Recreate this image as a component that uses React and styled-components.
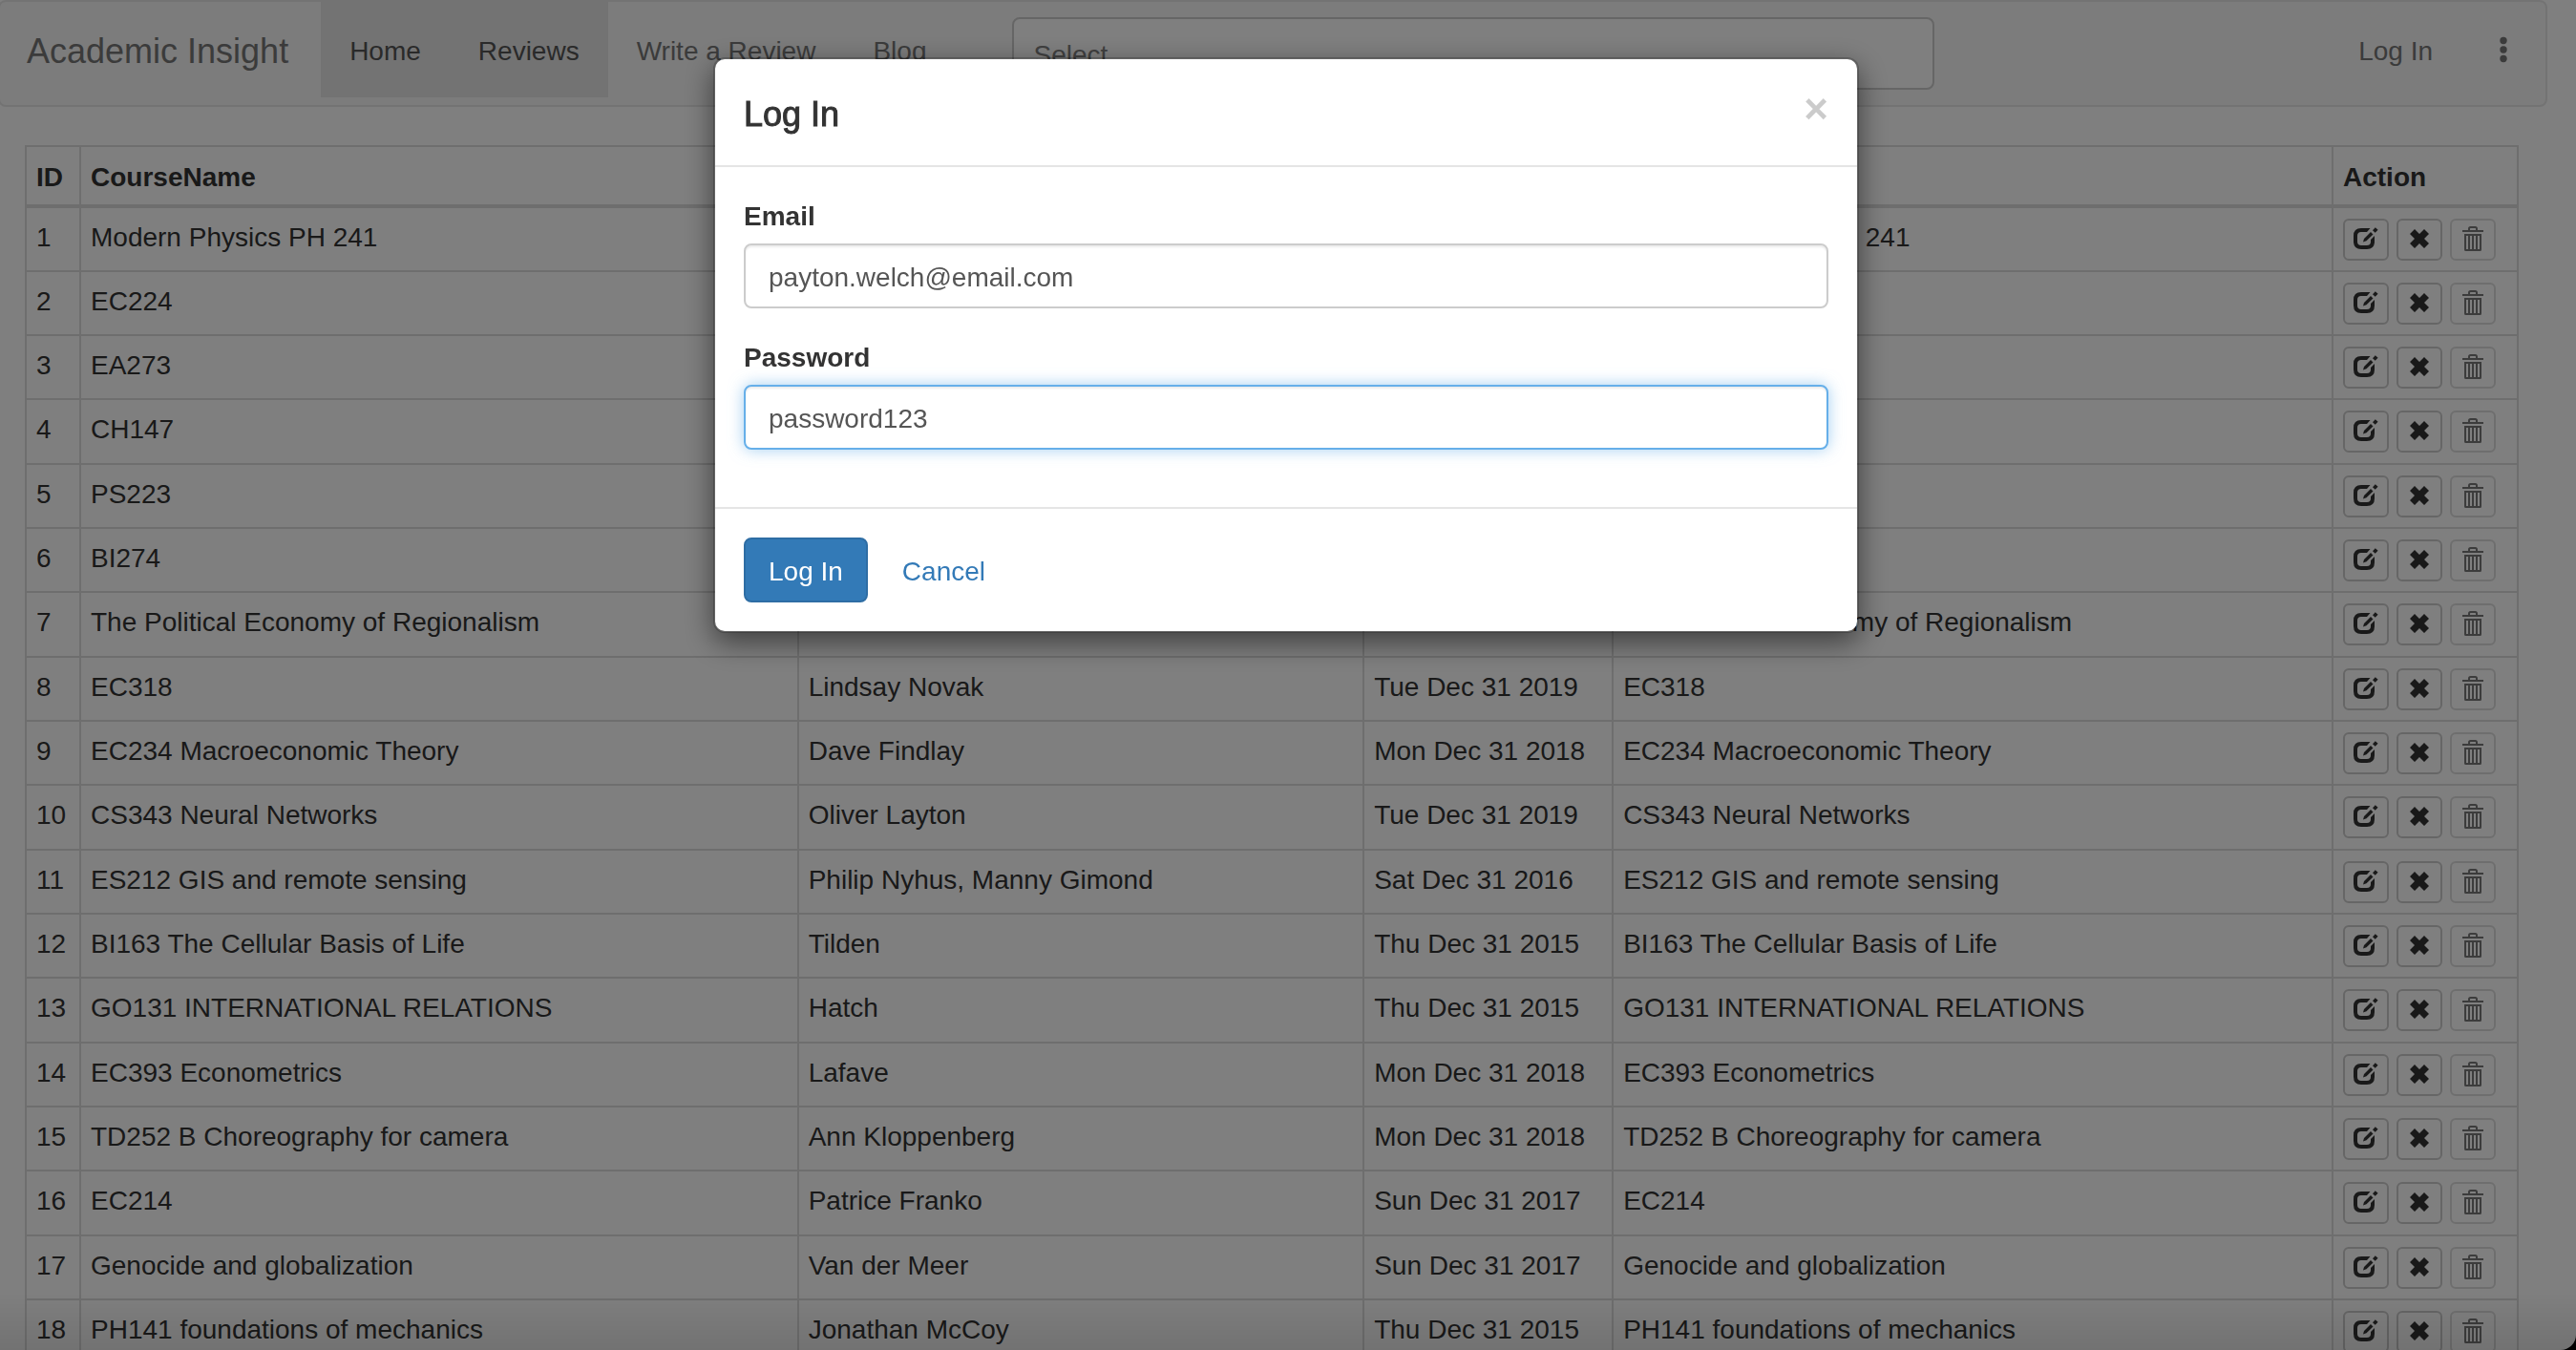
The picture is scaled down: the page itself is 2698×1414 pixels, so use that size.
import React from "react";
import styled, { createGlobalStyle, css } from "styled-components";

const GlobalStyle = createGlobalStyle`
  *, *::before, *::after { box-sizing: border-box; }
  html, body { margin: 0; height: 100%; overflow: hidden; background: #000; }
  body, button, input {
    font-family: "Liberation Sans", Arial, sans-serif;
    font-size: 28px;
    line-height: 40px;
  }
  body { color: #333; }
`;

const Page = styled.div`
  height: 100vh;
  overflow: hidden;
  border-bottom-right-radius: 16px;
  background: #fff;
`;

const Navbar = styled.nav`
  display: flex;
  align-items: flex-start;
  height: 112px;
  margin: 0 30px 40px -2px;
  border: 2px solid #e7e7e7;
  border-radius: 8px;
  background: #f8f8f8;
`;

const Brand = styled.a`
  padding: 30px 34px 26px 28px;
  color: #777;
  font-size: 36px;
  line-height: 44px;
  text-decoration: none;
`;

const NavLink = styled.a`
  padding: 30px 30px 26px;
  color: ${(p) => (p.$active ? "#555" : "#777")};
  background: ${(p) => (p.$active ? "#e7e7e7" : "transparent")};
  line-height: 44px;
  text-decoration: none;
`;

const CourseSearch = styled.input`
  flex: 0 1 966px;
  min-width: 0;
  height: 76px;
  margin: 16px auto 0 60px;
  padding: 4px 20px 0;
  border: 2px solid #ccc;
  border-radius: 8px;
  background: #fff;
  &::placeholder { color: #808080; opacity: 1; }
`;

const MenuButton = styled.button`
  display: flex;
  padding: 36px 30px;
  border: 0;
  background: transparent;
  color: #777;
`;

const TableArea = styled.main`
  padding: 0 60px 0 26px;
`;

const Table = styled.table`
  width: 100%;
  table-layout: fixed;
  border-collapse: collapse;
  border: 2px solid #ddd;
  th, td {
    padding: 11px 10px 9px;
    border: 2px solid #ddd;
    text-align: left;
    vertical-align: top;
    white-space: nowrap;
  }
  th {
    padding: 12px 10px 8px;
    border-bottom-width: 4px;
  }
  tbody tr { height: 67px; }
  tbody tr:nth-child(3n + 1) { height: 68px; }
`;

const Col = styled.col`
  width: ${(p) => p.$width};
`;

const Actions = styled.div`
  display: flex;
  gap: 8px;
`;

const IconButton = styled.button`
  display: flex;
  align-items: center;
  justify-content: center;
  width: 48px;
  height: 44px;
  padding: 0 0 2px;
  border: 2px solid #ccc;
  border-radius: 6px;
  background: #fff;
  color: #333;
  &:disabled { opacity: 0.65; }
`;

const Backdrop = styled.div`
  position: fixed;
  inset: 0;
  padding: 60px 4px 0 0;
  background:
    linear-gradient(to top, rgba(0, 0, 0, 0.1), transparent 60px),
    rgba(0, 0, 0, 0.5);
`;

const Dialog = styled.form`
  max-width: 1200px;
  margin: 0 auto;
  border: 2px solid rgba(0, 0, 0, 0.2);
  border-radius: 12px;
  background: #fff;
  background-clip: padding-box;
  box-shadow: 0 10px 30px rgba(0, 0, 0, 0.5);
`;

const DialogHeader = styled.header`
  display: flex;
  justify-content: space-between;
  align-items: flex-start;
  height: 113px;
  padding: 30px;
  border-bottom: 2px solid #e5e5e5;
`;

const DialogTitle = styled.h4`
  margin: 0;
  font-size: 36px;
  font-weight: 500;
  line-height: 56px;
  -webkit-text-stroke: 1px currentColor;
`;

const CloseButton = styled.button`
  padding: 0;
  border: 0;
  background: transparent;
  color: #000;
  font-size: 44px;
  font-weight: 700;
  line-height: 44px;
  opacity: 0.2;
`;

const DialogBody = styled.div`
  display: flex;
  flex-direction: column;
  gap: 30px;
  padding: 30px 30px 60px;
`;

const Field = styled.div`
  display: flex;
  flex-direction: column;
  gap: 6px;
`;

const Label = styled.label`
  font-weight: 700;
  line-height: 44px;
`;

const focused = css`
  border-color: #66afe9;
  box-shadow: inset 0 2px 2px rgba(0, 0, 0, 0.075), 0 0 16px rgba(102, 175, 233, 0.6);
`;

const TextInput = styled.input`
  width: 100%;
  height: 68px;
  padding: 14px 24px 10px;
  border: 2px solid #ccc;
  border-radius: 8px;
  background: #fff;
  color: #555;
  outline: none;
  box-shadow: inset 0 2px 2px rgba(0, 0, 0, 0.075);
  ${(p) => p.$focused && focused}
`;

const DialogFooter = styled.footer`
  display: flex;
  gap: 10px;
  padding: 30px;
  border-top: 2px solid #e5e5e5;
`;

const Button = styled.button`
  height: 68px;
  padding: 14px 24px 10px;
  border: 2px solid ${(p) => (p.$primary ? "#2e6da4" : "transparent")};
  border-radius: 8px;
  background: ${(p) => (p.$primary ? "#337ab7" : "transparent")};
  color: ${(p) => (p.$primary ? "#fff" : "#337ab7")};
`;

const EditIcon = () => (
  <svg width="26" height="24" viewBox="0 0 26 24" aria-hidden="true">
    <path d="M14 3H8Q2 3 2 9v6q0 6 6 6h6q6 0 6-6v-2" fill="none" stroke="currentColor" strokeWidth="4" />
    <path d="M14 1h3.500l-3.500 4zM18 13l4-4v5h-4zM10 15.500l1-3.500 7-7 2.500 2.500-7 6.800zM20 3.200l2.800-2.900 2.800 2.500-2.900 2.900z" fill="currentColor" />
  </svg>
);

const RemoveIcon = () => (
  <svg width="20" height="20" viewBox="0 0 20 20" aria-hidden="true">
    <path d="M5 0l5 5 5-5 5 5-5 5 5 5-5 5-5-5-5 5-5-5 5-5-5-5z" fill="currentColor" />
  </svg>
);

const TrashIcon = () => (
  <svg width="22" height="26" viewBox="0 0 22 26" aria-hidden="true">
    <g fill="none" stroke="currentColor" strokeWidth="2">
      <path d="M7 5V2.500Q7 1 8.500 1h5Q15 1 15 2.500V5M0 5h22" />
      <path d="M3 9h16v15.500q0 .5-.5.5h-15q-.5 0-.5-.5z" />
      <path d="M7 9v16M11 9v16M15 9v16" />
    </g>
  </svg>
);

const DotsIcon = () => (
  <svg width="28" height="28" viewBox="0 0 28 28" aria-hidden="true">
    <g fill="currentColor">
      <circle cx="14" cy="4.500" r="3.700" />
      <circle cx="14" cy="14" r="3.700" />
      <circle cx="14" cy="23.500" r="3.700" />
    </g>
  </svg>
);

const courses = [
  ["Modern Physics PH 241", "", ""],
  ["EC224", "", ""],
  ["EA273", "", ""],
  ["CH147", "", ""],
  ["PS223", "", ""],
  ["BI274", "", ""],
  ["The Political Economy of Regionalism", "Walter Hatch", "Sun Dec 31 2017"],
  ["EC318", "Lindsay Novak", "Tue Dec 31 2019"],
  ["EC234 Macroeconomic Theory", "Dave Findlay", "Mon Dec 31 2018"],
  ["CS343 Neural Networks", "Oliver Layton", "Tue Dec 31 2019"],
  ["ES212 GIS and remote sensing", "Philip Nyhus, Manny Gimond", "Sat Dec 31 2016"],
  ["BI163 The Cellular Basis of Life", "Tilden", "Thu Dec 31 2015"],
  ["GO131 INTERNATIONAL RELATIONS", "Hatch", "Thu Dec 31 2015"],
  ["EC393 Econometrics", "Lafave", "Mon Dec 31 2018"],
  ["TD252 B Choreography for camera", "Ann Kloppenberg", "Mon Dec 31 2018"],
  ["EC214", "Patrice Franko", "Sun Dec 31 2017"],
  ["Genocide and globalization", "Van der Meer", "Sun Dec 31 2017"],
  ["PH141 foundations of mechanics", "Jonathan McCoy", "Thu Dec 31 2015"],
];

export default function App() {
  return (
    <Page>
      <GlobalStyle />
      <Navbar>
        <Brand href="#">Academic Insight</Brand>
        <NavLink href="#" $active>Home</NavLink>
        <NavLink href="#" $active>Reviews</NavLink>
        <NavLink href="#">Write a Review</NavLink>
        <NavLink href="#">Blog</NavLink>
        <CourseSearch placeholder="Select..." aria-label="Select a course" />
        <NavLink href="#">Log In</NavLink>
        <MenuButton aria-label="More"><DotsIcon /></MenuButton>
      </Navbar>
      <TableArea>
        <Table>
          <colgroup>
            <Col $width="57px" />
            <Col $width="28.8%" />
            <Col $width="22.7%" />
            <Col $width="261px" />
            <Col />
            <Col $width="194px" />
          </colgroup>
          <thead>
            <tr>
              <th>ID</th>
              <th>CourseName</th>
              <th />
              <th />
              <th />
              <th>Action</th>
            </tr>
          </thead>
          <tbody>
            {courses.map(([name, professor, date], i) => (
              <tr key={name}>
                <td>{i + 1}</td>
                <td>{name}</td>
                <td>{professor}</td>
                <td>{date}</td>
                <td>{name}</td>
                <td>
                  <Actions>
                    <IconButton aria-label="Edit"><EditIcon /></IconButton>
                    <IconButton aria-label="Remove"><RemoveIcon /></IconButton>
                    <IconButton aria-label="Delete" disabled><TrashIcon /></IconButton>
                  </Actions>
                </td>
              </tr>
            ))}
          </tbody>
        </Table>
      </TableArea>
      <Backdrop>
        <Dialog role="dialog" aria-labelledby="login-title">
          <DialogHeader>
            <DialogTitle id="login-title">Log In</DialogTitle>
            <CloseButton type="button" aria-label="Close">×</CloseButton>
          </DialogHeader>
          <DialogBody>
            <Field>
              <Label htmlFor="email">Email</Label>
              <TextInput id="email" type="email" defaultValue="payton.welch@email.com" />
            </Field>
            <Field>
              <Label htmlFor="password">Password</Label>
              <TextInput id="password" type="text" defaultValue="password123" $focused />
            </Field>
          </DialogBody>
          <DialogFooter>
            <Button type="submit" $primary>Log In</Button>
            <Button type="button">Cancel</Button>
          </DialogFooter>
        </Dialog>
      </Backdrop>
    </Page>
  );
}
